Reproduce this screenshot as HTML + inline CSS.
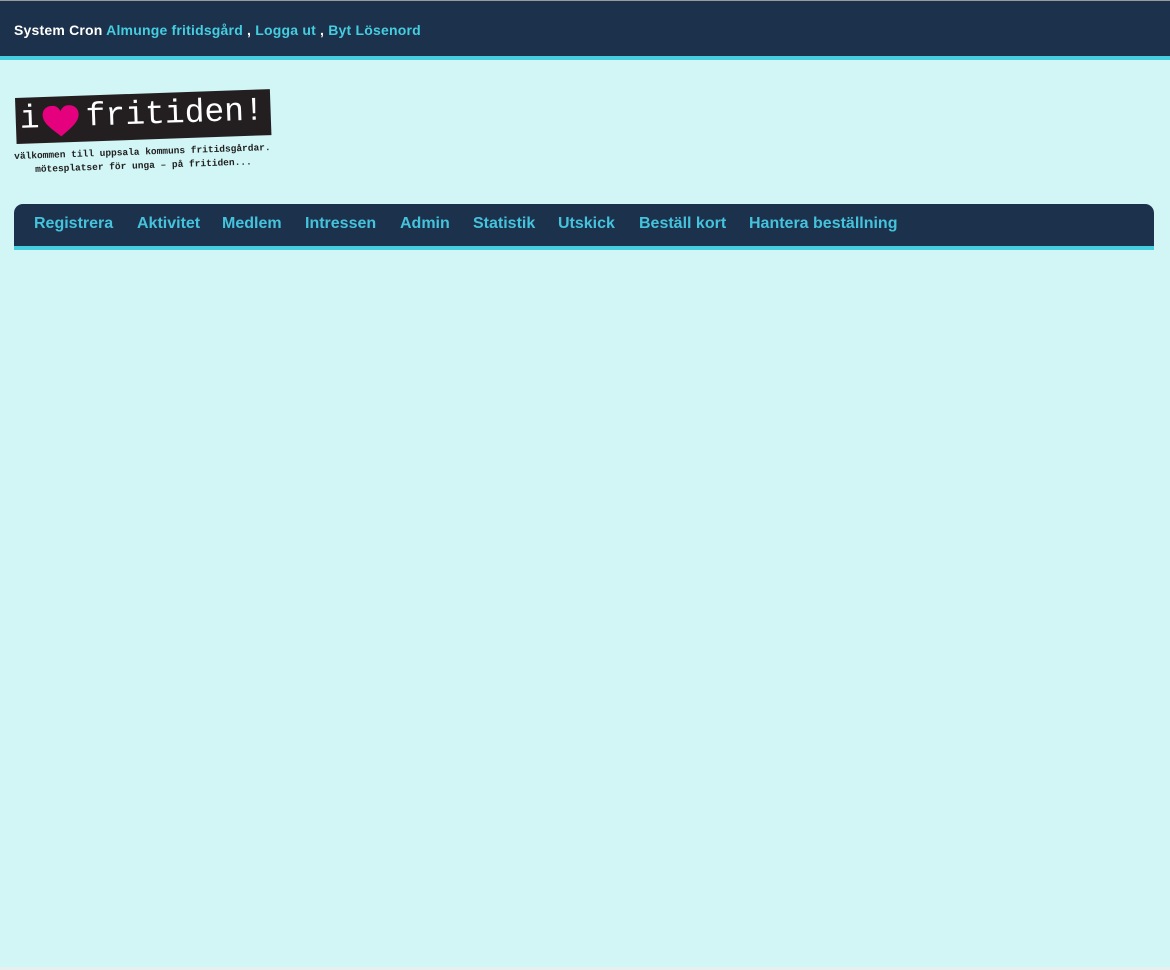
<!DOCTYPE html>
<html><head><meta charset="utf-8"><style>
body{margin:0;width:1170px;height:970px;background:#d2f5f5;font-family:"Liberation Sans",Arial,sans-serif;position:relative;overflow:hidden}
.top{position:absolute;left:0;top:0;width:1170px;height:55px;background:#1c314c;border-top:1px solid #9a9a9a;border-bottom:4px solid #45cde0;box-sizing:content-box}
.top div{position:absolute;left:14px;top:21px;font-size:14px;font-weight:bold;color:#fff;letter-spacing:0.2px}
.top span{color:#45cde0}
.nav{position:absolute;left:14px;top:204px;width:1140px;height:42px;background:#1c314c;border-radius:9px 9px 0 0;border-bottom:4px solid #45cde0}
.nav a{position:absolute;top:11px;font-size:16px;font-weight:bold;color:#45c3dc;text-decoration:none}
.logo{position:absolute;left:15px;top:90px}
.band{position:absolute;left:0;top:8px;width:255px;height:46px;background:#231f20;transform:rotate(-2deg);transform-origin:left top}
.band .t{position:absolute;left:70px;top:3px;font-family:"Liberation Mono",monospace;font-size:33px;color:#fff;letter-spacing:0}
.band .i{position:absolute;left:4px;top:3px;font-family:"Liberation Mono",monospace;font-size:33px;color:#fff}
.sub{position:absolute;font-family:"Liberation Mono",monospace;font-size:9.5px;font-weight:bold;color:#222;transform:rotate(-2deg);transform-origin:left top;white-space:nowrap;letter-spacing:0}
.bot{position:absolute;left:0;top:967px;width:1170px;height:3px;background:#e8efef}
</style></head><body>
<div class="top"><div>System Cron <span>Almunge fritidsgård</span> , <span>Logga ut</span> , <span>Byt Lösenord</span></div></div>
<div class="logo">
<div class="band"><span class="i">i</span>
<svg style="position:absolute;left:26px;top:9px" width="38" height="32" viewBox="0 0 38 32"><path d="M19 31 C8 22 1 17 1 9 C1 3 6 0 11 0 C15 0 18 3 19 6 C20 3 23 0 27 0 C32 0 37 3 37 9 C37 17 30 22 19 31Z" fill="#e5007e"/></svg>
<span class="t">fritiden!</span></div>
<div class="sub" style="left:-1px;top:61px">välkommen till uppsala kommuns fritidsgårdar.</div>
<div class="sub" style="left:20px;top:74px">mötesplatser för unga – på fritiden...</div>
</div>
<div class="nav">
<a style="left:20px">Registrera</a><a style="left:123px">Aktivitet</a><a style="left:208px">Medlem</a><a style="left:291px">Intressen</a><a style="left:386px">Admin</a><a style="left:459px">Statistik</a><a style="left:544px">Utskick</a><a style="left:625px">Beställ kort</a><a style="left:735px">Hantera beställning</a>
</div>
<div class="bot"></div>
</body></html>
